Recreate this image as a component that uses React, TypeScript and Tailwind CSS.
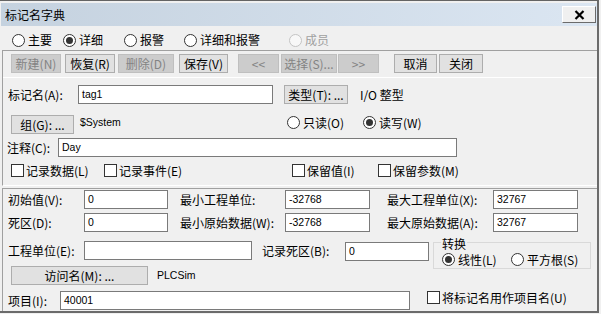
import React from "react";

const cjk = "font-['Noto_Sans_CJK_SC','Noto_Sans',sans-serif] text-[12px] leading-none";
const lat = "font-['Liberation_Sans',Arial,sans-serif] text-[10.5px] leading-none";

function Radio({ checked = false, disabled = false, label }: { checked?: boolean; disabled?: boolean; label: string }) {
  return (
    <div className="flex items-center h-[15px]">
      <span
        className={
          disabled
            ? "w-[13px] h-[13px] rounded-full border border-[#c4c4c4] bg-[#f8f8f8] flex items-center justify-center shrink-0"
            : "w-[13px] h-[13px] rounded-full border border-[#333333] bg-white flex items-center justify-center shrink-0"
        }
      >
        {checked && <span className="w-[7px] h-[7px] rounded-full bg-[#333333]" />}
      </span>
      <span className={disabled ? `ml-[3px] whitespace-nowrap text-[#a0a0a0] ${cjk}` : `ml-[3px] whitespace-nowrap text-black ${cjk}`}>
        {label}
      </span>
    </div>
  );
}

function Check({ label }: { label: string }) {
  return (
    <div className="flex items-center h-[15px]">
      <span className="w-[13px] h-[13px] border border-[#333333] bg-white shrink-0" />
      <span className={`ml-[2px] whitespace-nowrap text-black ${cjk}`}>{label}</span>
    </div>
  );
}

function Btn({ label, w, disabled = false }: { label: string; w: string; disabled?: boolean }) {
  return (
    <div
      className={
        disabled
          ? `${w} h-[19px] border border-[#bfbfbf] bg-[#cccccc] text-[#838383] flex items-center justify-center whitespace-nowrap ${cjk}`
          : `${w} h-[19px] border border-[#adadad] bg-[#e1e1e1] text-black flex items-center justify-center whitespace-nowrap ${cjk}`
      }
    >
      {label}
    </div>
  );
}

function Input({ w, value = "" }: { w: string; value?: string }) {
  return (
    <div className={`${w} h-[19px] border border-[#7a7a7a] bg-white flex items-center pl-[3px] text-black ${lat}`}>
      {value}
    </div>
  );
}

function Label({ w, text, cls = "" }: { w: string; text: string; cls?: string }) {
  return <div className={`${w} ${cls} h-[19px] flex items-center whitespace-nowrap text-black ${cjk}`}>{text}</div>;
}

export default function App() {
  return (
    <div className="w-[601px] h-[314px] bg-[#f0f0f0] overflow-hidden">
      <div className="w-[599px] h-[313px] border-t border-t-[#646464] border-r-2 border-r-[#6b6b6b] border-b-2 border-b-[#6b6b6b] flex flex-col">
        {/* title bar */}
        <div className="mt-[2px] ml-[1px] w-[596px] h-[23px] bg-linear-to-r from-[#c5d2df] to-[#dbe6f2] flex items-start">
          <div className={`ml-[4px] h-[23px] flex items-center text-black ${cjk}`}>标记名字典</div>
          <div className="ml-auto mr-[1px] mt-[3px] w-[34px] h-[17px] bg-[#f0f0f0] border border-t-white border-l-white border-r-[#6b6b6b] border-b-[#6b6b6b] flex items-center justify-center">
            <svg width="11" height="10" viewBox="0 0 11 10">
              <path d="M1.5 1 L9.5 9 M9.5 1 L1.5 9" stroke="#000" strokeWidth="2.2" />
            </svg>
          </div>
        </div>

        {/* radio row */}
        <div className="h-[24px] pt-[4px] flex items-center pl-[12px]">
          <div className="w-[51px]"><Radio label="主要" /></div>
          <div className="w-[61px]"><Radio checked label="详细" /></div>
          <div className="w-[60px]"><Radio label="报警" /></div>
          <div className="w-[105px]"><Radio label="详细和报警" /></div>
          <div><Radio disabled label="成员" /></div>
        </div>

        {/* frame 1 */}
        <div className="ml-[2px] h-[136px] border-t border-l border-[#a0a0a0] border-b border-b-white flex flex-col">
          <div className="mt-[3px] flex pl-[8px]">
            <Btn w="w-[50px]" disabled label="新建(N)" />
            <div className="ml-[4px]"><Btn w="w-[50px]" label="恢复(R)" /></div>
            <div className="ml-[3px]"><Btn w="w-[56px]" disabled label="删除(D)" /></div>
            <div className="ml-[5px]"><Btn w="w-[49px]" label="保存(V)" /></div>
            <div className="ml-[10px]"><Btn w="w-[41px]" disabled label="<<" /></div>
            <div className="ml-[2px]"><Btn w="w-[56px]" disabled label="选择(S)..." /></div>
            <div className="ml-[1px]"><Btn w="w-[41px]" disabled label=">>" /></div>
            <div className="ml-[15px]"><Btn w="w-[43px]" label="取消" /></div>
            <div className="ml-[2px]"><Btn w="w-[44px]" label="关闭" /></div>
          </div>
          <div className="mt-[4px] h-[1px] bg-white" />

          {/* tag row */}
          <div className="mt-[7px] flex items-center h-[19px] pl-[5px]">
            <Label w="w-[70px]" text="标记名(A):" />
            <Input w="w-[195px]" value="tag1" />
            <div className="ml-[11px]"><Btn w="w-[64px]" label="类型(T): ..." /></div>
            <div className={`ml-[12px] whitespace-nowrap text-black ${cjk}`}>I/O 整型</div>
          </div>

          {/* group row */}
          <div className="mt-[11px] flex items-start h-[19px] pl-[8px]">
            <Btn w="w-[63px]" label="组(G): ..." />
            <div className={`ml-[6px] w-[207px] h-[15px] flex items-center text-black ${lat}`}>$System</div>
            <div className="w-[76px]"><Radio label="只读(O)" /></div>
            <div><Radio checked label="读写(W)" /></div>
          </div>

          {/* comment row */}
          <div className="mt-[4px] flex items-center h-[19px] pl-[4px]">
            <Label w="w-[51px]" text="注释(C):" />
            <Input w="w-[399px]" value="Day" />
          </div>

          {/* checkbox row */}
          <div className="mt-[5px] flex items-center h-[17px] pl-[8px]">
            <div className="w-[93px]"><Check label="记录数据(L)" /></div>
            <div className="w-[188px]"><Check label="记录事件(E)" /></div>
            <div className="w-[86px]"><Check label="保留值(I)" /></div>
            <div><Check label="保留参数(M)" /></div>
          </div>
        </div>

        {/* frame 2 */}
        <div className="mt-[2px] ml-[2px] flex-1 border-t border-l border-[#a0a0a0] flex flex-col">
          <div className="mt-[1px] flex items-center h-[19px] pl-[5px]">
            <Label w="w-[76px]" text="初始值(V):" />
            <Input w="w-[84px]" value="0" />
            <Label w="w-[105px]" cls="ml-[12px]" text="最小工程单位:" />
            <Input w="w-[85px]" value="-32768" />
            <Label w="w-[106px]" cls="ml-[17px]" text="最大工程单位(X):" />
            <Input w="w-[85px]" value="32767" />
          </div>
          <div className="mt-[4px] flex items-center h-[19px] pl-[5px]">
            <Label w="w-[76px]" text="死区(D):" />
            <Input w="w-[84px]" value="0" />
            <Label w="w-[105px]" cls="ml-[12px]" text="最小原始数据(W):" />
            <Input w="w-[85px]" value="-32768" />
            <Label w="w-[106px]" cls="ml-[17px]" text="最大原始数据(A):" />
            <Input w="w-[85px]" value="32767" />
          </div>

          <div className="mt-[9px] flex items-start">
            <div className="w-[426px] flex flex-col">
              <div className="flex items-start h-[19px] pl-[5px]">
                <Label w="w-[76px]" text="工程单位(E):" />
                <Input w="w-[168px]" />
                <Label w="w-[83px]" cls="ml-[10px]" text="记录死区(B):" />
                <div className="mt-[1px]"><Input w="w-[84px]" value="0" /></div>
              </div>
              <div className="mt-[6px] flex items-center h-[19px] pl-[8px]">
                <Btn w="w-[137px]" label="访问名(M): ..." />
                <div className={`ml-[9px] text-black ${lat}`}>PLCSim</div>
              </div>
            </div>
            <div className="ml-[4px] mt-[1px] w-[158px] h-[27px] border border-[#d9d9d9] flex flex-col">
              <div className={`-mt-[6px] ml-[7px] px-[1px] w-fit bg-[#f0f0f0] h-[13px] flex items-center text-black ${cjk}`}>转换</div>
              <div className="mt-[2px] flex items-center pl-[8px]">
                <div className="w-[69px]"><Radio checked label="线性(L)" /></div>
                <div><Radio label="平方根(S)" /></div>
              </div>
            </div>
          </div>

          <div className="mt-[6px] flex items-start h-[19px] pl-[5px]">
            <Label w="w-[52px]" text="项目(I):" />
            <Input w="w-[350px]" value="40001" />
            <div className="ml-[17px] mt-[-1px]"><Check label="将标记名用作项目名(U)" /></div>
          </div>
        </div>
      </div>
    </div>
  );
}
